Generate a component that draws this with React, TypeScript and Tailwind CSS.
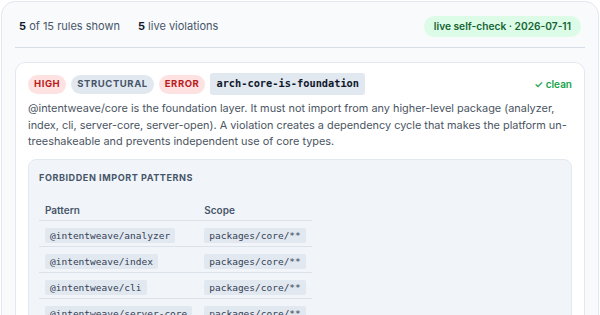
const patterns = [
  "@intentweave/analyzer",
  "@intentweave/index",
  "@intentweave/cli",
  "@intentweave/server-core",
  "@intentweave/server-open",
];

const mono = { fontFamily: '"DejaVu Sans Mono", "Liberation Mono", monospace' };

function Pill({ label, tone }: { label: string; tone: "red" | "slate" }) {
  return (
    <span
      className={`flex h-[19px] items-center rounded-full px-[6px] text-[9.5px] font-bold uppercase tracking-[0.06em] ${
        tone === "red" ? "bg-[#fee2e2] text-[#b91c1c]" : "bg-[#e2e8f0] text-[#475569]"
      }`}
    >
      {label}
    </span>
  );
}

function Code({ children }: { children: string }) {
  return (
    <code
      style={mono}
      className="inline-block rounded-[2px] bg-[#e2e8f0] px-[5px] py-[2px] align-middle text-[9.5px] leading-[11px] text-[#334155]"
    >
      {children}
    </code>
  );
}

export default function App() {
  return (
    <div className="min-h-screen bg-white p-px font-['Inter','Noto_Sans',sans-serif]">
      <div className="h-[420px] overflow-hidden rounded-[14px] border border-[#e2e8f0] bg-[#f8fafc] px-[13px]">
        {/* Summary header */}
        <div className="flex items-center justify-between border-b border-[#d5dde7] px-1 pb-[10px] pt-[14px]">
          <div className="flex items-center gap-[18px] text-[11px] text-[#475569]">
            <span>
              <b className="font-bold text-[#0f172a]">5</b> of 15 rules shown
            </span>
            <span>
              <b className="font-bold text-[#0f172a]">5</b> live violations
            </span>
          </div>
          <span className="rounded-full bg-[#dcfce7] px-[10px] py-[3px] text-[10.2px] font-semibold leading-[15px] text-[#166534]">
            live self-check · 2026-07-11
          </span>
        </div>

        {/* Rule card */}
        <div className="mt-[14px] rounded-[10px] border border-[#e2e8f0] bg-white px-3 pb-4 pt-[10px]">
          <div className="flex items-center gap-[5px]">
            <Pill label="High" tone="red" />
            <Pill label="Structural" tone="slate" />
            <Pill label="Error" tone="red" />
            <code
              style={mono}
              className="flex h-[22px] items-center rounded-[3px] bg-[#e2e8f0] px-[6px] text-[10.3px] font-bold text-[#0f172a]"
            >
              arch-core-is-foundation
            </code>
            <span className="ml-auto text-[10px] font-semibold text-[#16a34a]">✓ clean</span>
          </div>

          <p className="mt-[5px] text-[10.9px] leading-[16.7px] text-[#4b5563]">
            @intentweave/core is the foundation layer. It must not import from any higher-level package (analyzer,
            index, cli, server-core, server-open). A violation creates a dependency cycle that makes the platform
            un-treeshakeable and prevents independent use of core types.
          </p>

          <div className="mt-[9px] rounded-[8px] border border-[#e2e8f0] bg-[#f1f5f9] px-[10px] pb-3 pt-[11px]">
            <div className="text-[9.1px] font-bold uppercase tracking-[0.06em] text-[#475569]">
              Forbidden import patterns
            </div>
            <table className="mt-[15px] border-collapse">
              <thead>
                <tr>
                  <th className="h-[21px] px-[6px] py-0 text-left align-middle text-[10px] font-semibold text-[#475569]">Pattern</th>
                  <th className="h-[21px] px-[6px] py-0 text-left align-middle text-[10px] font-semibold text-[#475569]">Scope</th>
                </tr>
              </thead>
              <tbody>
                {patterns.map((p) => (
                  <tr key={p} className="border-t border-[#dbe2ea]">
                    <td className="h-[26px] px-[6px] py-0 align-middle">
                      <Code>{p}</Code>
                    </td>
                    <td className="h-[26px] px-[6px] py-0 align-middle">
                      <Code>packages/core/**</Code>
                    </td>
                  </tr>
                ))}
              </tbody>
            </table>
          </div>
        </div>
      </div>
    </div>
  );
}
